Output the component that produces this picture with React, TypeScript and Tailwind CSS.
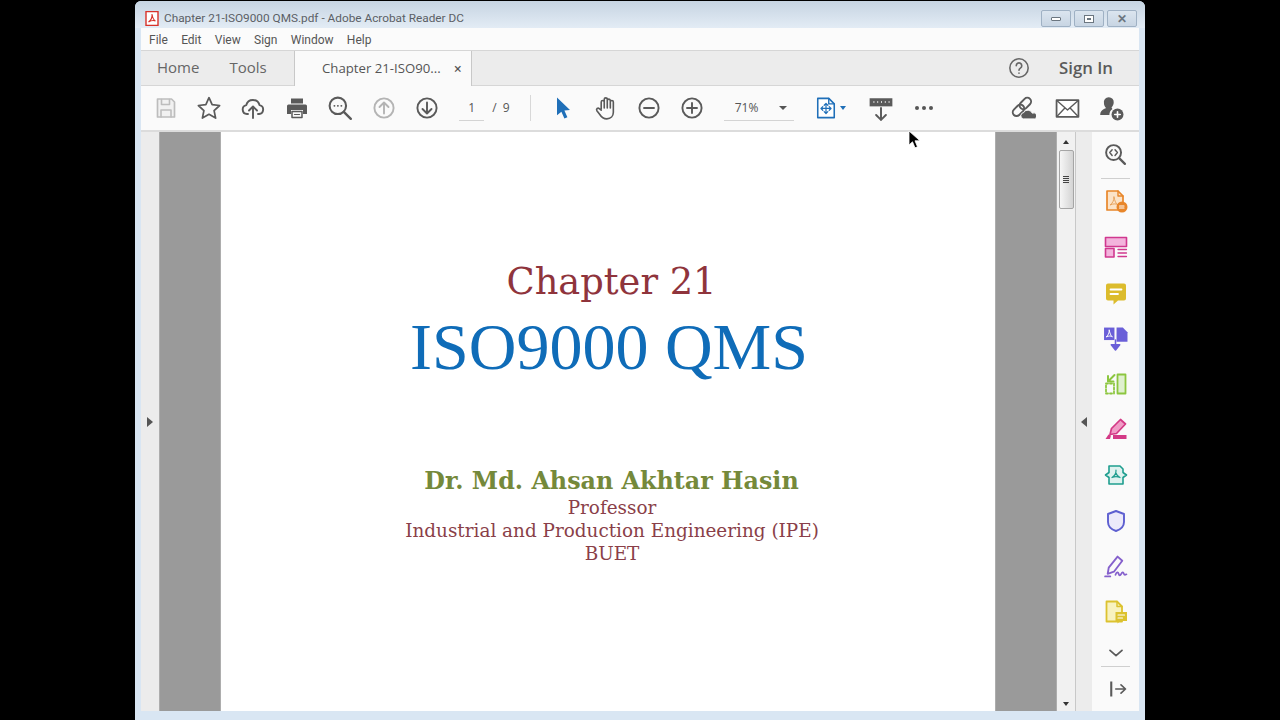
import type { ReactNode } from "react";

const GRAY = "#5a5a5a";

function Svg({ size = 24, children }: { size?: number; children: ReactNode }) {
  return (
    <svg width={size} height={size} viewBox="0 0 24 24" fill="none" strokeLinecap="round" strokeLinejoin="round">
      {children}
    </svg>
  );
}

function Tool({ children, w = "w-[43.6px]" }: { children: ReactNode; w?: string }) {
  return <div className={"flex h-full shrink-0 items-center justify-center " + w}>{children}</div>;
}

function CircleIcon({ color = GRAY, children }: { color?: string; children: ReactNode }) {
  return (
    <Svg>
      <circle cx="12" cy="12" r="9.6" stroke={color} strokeWidth="1.9" />
      <g stroke={color} strokeWidth="1.9">{children}</g>
    </Svg>
  );
}

function TopToolbar() {
  return (
    <div className="flex h-[46px] shrink-0 items-center border-b-2 border-[#dcdcdc] bg-[#fafafa] pl-[3px]">
      <Tool>
        <Svg>
          <path d="M3.5 3h14l3 3v15h-17z" fill="#f1f1f1" stroke="#bdbdbd" strokeWidth="1.7" />
          <path d="M7.5 3.5v5h8v-5M7 21v-7h10v7" stroke="#bdbdbd" strokeWidth="1.6" />
        </Svg>
      </Tool>
      <Tool>
        <Svg size={26}>
          <path d="M12 2.5l2.9 6.4 6.9.8-5.1 4.7 1.4 6.9-6.1-3.5-6.1 3.5 1.4-6.9-5.1-4.7 6.9-.8z" stroke={GRAY} strokeWidth="1.6" />
        </Svg>
      </Tool>
      <Tool>
        <Svg>
          <path d="M7 18H6a4.5 4.5 0 0 1-.7-8.9 6.8 6.8 0 0 1 13.2 0A4.5 4.5 0 0 1 18 18h-1" stroke={GRAY} strokeWidth="1.9" />
          <path d="M12 22v-11M8 14.5l4-4 4 4" stroke={GRAY} strokeWidth="1.9" />
        </Svg>
      </Tool>
      <Tool>
        <Svg>
          <path d="M6 2.5h12v5H6z" fill={GRAY} />
          <path d="M3.5 8.5h17a1.5 1.5 0 0 1 1.5 1.5v8h-4v-4H6v4H2v-8a1.5 1.5 0 0 1 1.5-1.5z" fill={GRAY} />
          <path d="M7 15.5h10v6H7z" stroke={GRAY} strokeWidth="1.5" />
          <path d="M9.5 18.5h5" stroke={GRAY} strokeWidth="1.2" />
        </Svg>
      </Tool>
      <Tool>
        <Svg size={26}>
          <circle cx="10" cy="10" r="7.6" stroke={GRAY} strokeWidth="1.9" />
          <path d="M15.5 15.5l6.5 6.5" stroke={GRAY} strokeWidth="2.2" />
          <path d="M6.8 10h.1M10 10h.1M13.2 10h.1" stroke={GRAY} strokeWidth="1.7" />
        </Svg>
      </Tool>
      <Tool>
        <CircleIcon color="#b4b4b4">
          <path d="M12 17.5v-11M7.5 11l4.5-4.5 4.5 4.5" />
        </CircleIcon>
      </Tool>
      <Tool>
        <CircleIcon>
          <path d="M12 6.5v11M7.5 13l4.5 4.5 4.5-4.5" />
        </CircleIcon>
      </Tool>
      <div className="flex h-full w-[81px] shrink-0 items-center pl-[10px] text-[12px] text-[#555]">
        <span className="w-[25px] border-b border-[#d4d4d4] py-[3px] text-center">1</span>
        <span className="ml-[8px]">/ &nbsp;9</span>
      </div>
      <div className="h-[26px] w-px shrink-0 bg-[#d8d8d8]" />
      <div className="w-[9px] shrink-0" />
      <Tool w="w-[43.4px]">
        <Svg>
          <path d="M7 1.5l13 12.5-5.6.6 3 6.6-3 1.3-3-6.8-4.4 3.6z" fill="#1f6fb8" />
        </Svg>
      </Tool>
      <Tool w="w-[43.4px]">
        <Svg size={26}>
          <path
            transform="translate(1.5 0)"
            d="M7 13V6.5a1.4 1.4 0 0 1 2.8 0V4a1.4 1.4 0 0 1 2.8 0v1.2a1.4 1.4 0 0 1 2.8 0v1.3a1.4 1.4 0 0 1 2.8 0V16c0 3.5-2.5 6-6 6s-5-1.5-6.5-4L3 14.5c-1-1.8 1-3 2.2-2L7 14M9.8 6.5V12M12.6 5v7M15.4 6.5V12"
            stroke={GRAY}
            strokeWidth="1.5"
          />
        </Svg>
      </Tool>
      <Tool w="w-[43.4px]">
        <CircleIcon>
          <path d="M7 12h10" />
        </CircleIcon>
      </Tool>
      <Tool w="w-[43.4px]">
        <CircleIcon>
          <path d="M7 12h10M12 7v10" />
        </CircleIcon>
      </Tool>
      <div className="ml-[10px] flex h-[26px] w-[70px] shrink-0 items-center justify-between border-b border-[#d4d4d4] pl-[11px] pr-[7px] text-[12px] text-[#555]">
        <span>71%</span>
        <span className="h-0 w-0 border-x-[4px] border-t-[4px] border-x-transparent border-t-[#555]" />
      </div>
      <div className="flex w-[57px] shrink-0 items-center pl-[21px]">
        <Svg size={22}>
          <path d="M3 1.5h12l6 6v15H3z" fill="#fff" stroke="#1f6fb8" strokeWidth="1.7" />
          <path d="M15 1.5v6h6" stroke="#1f6fb8" strokeWidth="1.5" />
          <path d="M12 7v11M6.5 12.5h11M10 9l2-2 2 2M10 16l2 2 2-2M8.5 10.5l-2 2 2 2M15.5 10.5l2 2-2 2" stroke="#1f6fb8" strokeWidth="1.3" />
        </Svg>
        <span className="ml-[3px] h-0 w-0 border-x-[3.5px] border-t-[4px] border-x-transparent border-t-[#1f6fb8]" />
      </div>
      <div className="w-[8px] shrink-0" />
      <Tool>
        <Svg size={26}>
          <path d="M1.5 3h21v7.5h-21z" fill={GRAY} />
          <path d="M5 6.5h.9M8.5 6.5h.9M12 6.5h.9M15.5 6.5h.9M19 6.5h.9" stroke="#fff" strokeWidth="1.5" strokeLinecap="butt" />
          <path d="M12 12v11M7.5 18.5l4.500 4.500 4.500-4.500" stroke={GRAY} strokeWidth="1.8" />
        </Svg>
      </Tool>
      <Tool>
        <span className="flex gap-[3px]">
          <span className="size-[4px] rounded-full bg-[#555]" />
          <span className="size-[4px] rounded-full bg-[#555]" />
          <span className="size-[4px] rounded-full bg-[#555]" />
        </span>
      </Tool>
      <div className="ml-auto flex h-full pr-[6px]">
        <Tool w="w-[44px]">
          <Svg size={26}>
            <g transform="rotate(-45 11 11)" stroke={GRAY} strokeWidth="1.8">
              <rect x="0.5" y="7.5" width="12" height="7" rx="3.5" />
              <rect x="9.5" y="7.5" width="12" height="7" rx="3.5" />
            </g>
            <path d="M12 22a3 3 0 0 1 .6-5.8 4.5 4.5 0 0 1 8 .6 2.7 2.7 0 0 1 2.4 5.200z" fill={GRAY} stroke="#fafafa" strokeWidth=".8" />
          </Svg>
        </Tool>
        <Tool w="w-[44px]">
          <Svg size={25}>
            <path d="M1.5 4h21v16h-21z" fill="#fff" stroke={GRAY} strokeWidth="1.7" />
            <path d="M2 4.5l10 9 10-9M2 19.5l7.5-8M22 19.5l-7.5-8" stroke={GRAY} strokeWidth="1.3" />
          </Svg>
        </Tool>
        <Tool w="w-[44px]">
          <Svg size={26}>
            <path d="M10 2a4.5 4.5 0 0 1 4.5 5c0 2-1 3.5-2 4.5l.8 1.500c-1.500 1-2.800 3-2.800 5.500H2c0-3 1.500-4.500 3.500-5.500l2-1c-1-1-2-2.500-2-4.500A4.500 4.500 0 0 1 10 2z" fill={GRAY} />
            <circle cx="18" cy="18" r="5.5" fill={GRAY} />
            <path d="M15.5 18h5M18 15.5v5" stroke="#fff" strokeWidth="1.5" />
          </Svg>
        </Tool>
      </div>
    </div>
  );
}

function PanelIcon({ children }: { children: ReactNode }) {
  return <div className="flex h-[45.6px] shrink-0 items-center justify-center">{children}</div>;
}

function RightPanel() {
  return (
    <div className="flex w-[47px] shrink-0 flex-col bg-[#fafafa]">
      <PanelIcon>
        <Svg size={23}>
          <circle cx="10" cy="10" r="7.8" stroke={GRAY} strokeWidth="2" />
          <path d="M15.8 15.8l6 6" stroke={GRAY} strokeWidth="2.4" />
          <path d="M8.5 7l-2.500 3 2.500 3M11.500 7l2.500 3-2.500 3" stroke={GRAY} strokeWidth="1.5" />
        </Svg>
      </PanelIcon>
      <div className="mx-[9px] h-px shrink-0 bg-[#cfcfcf]" />
      <PanelIcon>
        <Svg>
          <path d="M3 2h11l5 5v14H3z" fill="#fbe3c8" stroke="#e8862a" strokeWidth="1.7" />
          <path d="M14 2v5h5" stroke="#e8862a" strokeWidth="1.4" />
          <path d="M10 8c.5 3-2 7-4 8 3-1.5 7-1.5 8 0-2-1-3.5-4.5-4-8z" stroke="#e8a35c" strokeWidth="1" />
          <circle cx="18" cy="18" r="5.5" fill="#e8862a" />
          <path d="M15.5 17h4.500M20 19h-4.500" stroke="#fff" strokeWidth="1.2" />
        </Svg>
      </PanelIcon>
      <PanelIcon>
        <Svg>
          <path d="M1.5 2.5h21v9h-21z" fill="#f3b3dc" stroke="#d0388f" strokeWidth="1.6" />
          <path d="M1.5 13.5h8.500v8.500H1.500z" fill="#f3b3dc" stroke="#d0388f" strokeWidth="1.6" />
          <path d="M14 14.5h8.500M14 18h8.500M14 21.500h8.500" stroke="#d0388f" strokeWidth="1.3" />
        </Svg>
      </PanelIcon>
      <PanelIcon>
        <Svg>
          <path d="M4 2.5h16a2 2 0 0 1 2 2v13a2 2 0 0 1-2 2h-6l-4.500 4v-4H4a2 2 0 0 1-2-2v-13a2 2 0 0 1 2-2z" fill="#dcbc2d" />
          <path d="M6.5 8.5h11M6.500 13h7.500" stroke="#fff" strokeWidth="1.8" />
        </Svg>
      </PanelIcon>
      <PanelIcon>
        <Svg size={25}>
          <path d="M1 1.5h10v12H1z" fill="#6a5fd8" />
          <path d="M13 1.5h6l4.500 4.500v9H13z" fill="#6a5fd8" />
          <path d="M6 4c.4 2.5-1.500 5.500-3 6.500 2.500-1.200 5-1.200 6 0-1.500-1-2.600-4-3-6.500z" stroke="#fff" strokeWidth=".9" />
          <path d="M12 13.5v6M8 18h8l-4 5z" fill="#6a5fd8" stroke="#6a5fd8" strokeWidth="1.5" />
        </Svg>
      </PanelIcon>
      <PanelIcon>
        <Svg>
          <path d="M13.5 2.5h8v19h-8z" fill="#dff0cf" stroke="#8cc63f" strokeWidth="1.8" />
          <path d="M2 11.5h8v10H2z" stroke="#8cc63f" strokeWidth="1.8" strokeDasharray="2 2" />
          <path d="M10.5 3l-6 6M4 4v5.500h5.500" stroke="#8cc63f" strokeWidth="2" />
        </Svg>
      </PanelIcon>
      <PanelIcon>
        <Svg>
          <path d="M16.5 2.5l5 4.500-9 9.500-6.500 1 1.500-6z" fill="#f09cc6" stroke="#d33a86" strokeWidth="1.7" />
          <path d="M1.5 22l3-4.500 2.500 1-1 3.500zM9 18h13.500v4H9z" fill="#d33a86" />
        </Svg>
      </PanelIcon>
      <PanelIcon>
        <Svg>
          <path d="M5 3h11l3 3v3.500l3.500 2.500-3.500 2.500V21H5v-6.500L1.500 12 5 9.500z" fill="#dff2ef" stroke="#1f9e8f" strokeWidth="1.6" />
          <path d="M12 7c.2 3-1.500 6-4 7.500M12 10c.5 2 2 3.500 4 4.500M8 14.500c2.500-1 5.500-1 8 0" stroke="#1f9e8f" strokeWidth="1.2" />
        </Svg>
      </PanelIcon>
      <PanelIcon>
        <Svg>
          <path d="M12 2l8 3v8c0 4.500-3.500 7.500-8 9-4.500-1.500-8-4.500-8-9V5z" fill="#eceafa" stroke="#5d5fd0" strokeWidth="1.9" />
        </Svg>
      </PanelIcon>
      <PanelIcon>
        <Svg size={25}>
          <path d="M14 2.5l4.500 4-8 10.500-6 2 1-6z" stroke="#8560cc" strokeWidth="1.8" />
          <path d="M2 21.5h5M12 20c1-3 2.500-3 3-1s1.500 2 2.500 0 2-1.500 2.500 0 1.500 1 2.500.5" stroke="#8560cc" strokeWidth="1.7" />
        </Svg>
      </PanelIcon>
      <PanelIcon>
        <Svg>
          <path d="M2.5 1.5h10.500l5 5v15H2.500z" fill="#f8f2bf" stroke="#dcc22f" strokeWidth="1.8" />
          <path d="M13 1.5v5h5" stroke="#dcc22f" strokeWidth="1.5" />
          <path d="M11.5 12h11.500v9h-7l-2.500 2.500V21h-2z" fill="#dcc22f" />
          <path d="M14 15h6.500M14 18h4.500" stroke="#fff" strokeWidth="1.2" />
        </Svg>
      </PanelIcon>
      <div className="flex h-[31px] shrink-0 items-center justify-center pt-[6px]">
        <Svg size={16}>
          <path d="M3 8l9 8 9-8" stroke={GRAY} strokeWidth="2.6" />
        </Svg>
      </div>
      <div className="mx-[9px] h-px shrink-0 bg-[#cfcfcf]" />
      <div className="flex h-[45px] shrink-0 items-center justify-center pl-[4px]">
        <Svg size={18}>
          <path d="M3 2v20" stroke={GRAY} strokeWidth="2.8" strokeLinecap="butt" />
          <path d="M9 12h13M16 6.5l6 5.500-6 5.500" stroke={GRAY} strokeWidth="2.2" />
        </Svg>
      </div>
    </div>
  );
}

function PdfPage() {
  return (
    <div className="flex w-[774px] shrink-0 flex-col items-center overflow-hidden bg-white font-['Liberation_Serif',serif]">
      <div className="ml-[7px] mt-[125px] font-['DejaVu_Serif',serif] text-[36.8px] leading-[50px] text-[#8f343c]">Chapter 21</div>
      <div className="ml-[2px] text-[66px] leading-[80px] text-[#0f6cb8]">ISO9000 QMS</div>
      <div className="ml-[7px] mt-[78px] font-['DejaVu_Serif',serif] text-[23.8px] font-bold leading-[32px] text-[#75893a]">Dr. Md. Ahsan Akhtar Hasin</div>
      <div className="ml-[8px] flex flex-col items-center font-['DejaVu_Serif',serif] text-[18.4px] leading-[23px] text-[#8a3f49]">
        <span className="leading-[22px]">Professor</span>
        <span>Industrial and Production Engineering (IPE)</span>
        <span>BUET</span>
      </div>
    </div>
  );
}

function Scrollbar() {
  return (
    <div className="flex w-[18px] shrink-0 flex-col items-center bg-[#f1f1f1]">
      <span className="mt-[8px] h-0 w-0 border-x-[3.5px] border-b-[4px] border-x-transparent border-b-[#333]" />
      <div className="mt-[6px] flex h-[59px] w-[15px] flex-col items-center justify-center gap-px rounded-[2px] border border-[#a5a5a5] bg-gradient-to-r from-[#f6f6f6] to-[#d4d4d4]">
        <span className="h-px w-[6px] bg-[#444]" />
        <span className="h-px w-[6px] bg-[#444]" />
        <span className="h-px w-[6px] bg-[#444]" />
        <span className="h-px w-[6px] bg-[#444]" />
      </div>
      <span className="mb-[5px] mt-auto h-0 w-0 border-x-[3.5px] border-t-[4px] border-x-transparent border-t-[#333]" />
    </div>
  );
}

function WindowButton({ children }: { children: ReactNode }) {
  return (
    <div className="flex h-[17px] w-[30px] items-center justify-center rounded-[2px] border border-[#9fb1c4] bg-gradient-to-b from-[#dbe5ef] to-[#c8d5e3]">
      {children}
    </div>
  );
}

export default function App() {
  return (
    <div className="relative flex h-[720px] w-[1280px] items-end justify-center overflow-hidden bg-black font-['Open_Sans',sans-serif]">
      <div className="flex h-[719px] w-[1010px] flex-col rounded-t-[6px] bg-[#d9e6f3] px-[6px] pb-[9px]">
        <div className="-mx-[6px] flex h-[27px] shrink-0 items-center rounded-t-[6px] bg-gradient-to-b from-[#c6d4e2] to-[#e3ecf5] pl-[10px] pr-[8px] pt-[8px] font-['Roboto',sans-serif]">
          <svg width="14" height="15" viewBox="0 0 14 15">
            <path d="M1 .5h12v14H1z" fill="#fff" stroke="#d8322a" strokeWidth="1.4" />
            <path d="M7 3c.4 3-1.5 6.5-3.5 8 2.500-1.500 5-2 7-1-2-.8-3-4-3.500-7z" fill="none" stroke="#d8322a" strokeWidth="1.1" />
          </svg>
          <span className="ml-[5px] text-[11.8px] text-[#5b5f66]">Chapter 21-ISO9000 QMS.pdf - Adobe Acrobat Reader DC</span>
          <div className="ml-auto flex gap-[3px]">
            <WindowButton><span className="h-[4px] w-[10px] rounded-[1px] border border-[#6b7680] bg-white" /></WindowButton>
            <WindowButton><span className="flex h-[8px] w-[10px] items-center justify-center border border-[#6b7680] bg-white"><span className="h-[2px] w-[4px] border border-[#6b7680]" /></span></WindowButton>
            <WindowButton><span className="text-[12px] font-bold leading-none text-[#6b7680]">✕</span></WindowButton>
          </div>
        </div>
        <div className="flex h-[22px] shrink-0 items-center gap-[13.3px] bg-[#fbfbfb] pl-[8px] pt-[2px] font-['Roboto',sans-serif] text-[12px] text-[#555]">
          <span>File</span>
          <span>Edit</span>
          <span>View</span>
          <span>Sign</span>
          <span>Window</span>
          <span>Help</span>
        </div>
        <div className="flex h-[36px] shrink-0 items-stretch border-y border-[#d6d6d6] bg-[#ececec] text-[#666]">
          <div className="flex w-[153px] items-center gap-[30px] pb-[2px] pl-[16px] text-[15px]">
            <span>Home</span>
            <span>Tools</span>
          </div>
          <div className="-mb-px flex w-[178px] items-center border-x border-[#c8c8c8] bg-[#fafafa] pl-[27px] text-[13.2px] text-[#555]">
            <span>Chapter 21-ISO90...</span>
            <span className="ml-[13px] text-[14px] font-semibold leading-none text-[#555]">×</span>
          </div>
          <div className="ml-auto flex items-center pb-px pr-[26px]">
            <Svg size={22}>
              <circle cx="12" cy="12" r="10" stroke="#666" strokeWidth="1.7" />
              <path d="M9 9.5a3 3 0 1 1 4.500 2.600c-1 .6-1.500 1-1.500 2.400M12 17.600v.1" stroke="#666" strokeWidth="1.8" />
            </Svg>
            <span className="ml-[29px] text-[16.8px] font-semibold text-[#5a5a5a]">Sign In</span>
          </div>
        </div>
        <TopToolbar />
        <div className="flex min-h-0 flex-1">
          <div className="flex w-[18px] shrink-0 items-center justify-center bg-[#ececec]">
            <span className="h-0 w-0 border-y-[5px] border-l-[6px] border-y-transparent border-l-[#555]" />
          </div>
          <div className="w-[62px] shrink-0 border-x border-[#adadad] bg-[#9a9a9a]" />
          <PdfPage />
          <div className="w-[62px] shrink-0 border-x border-[#adadad] bg-[#9a9a9a]" />
          <Scrollbar />
          <div className="flex w-[17px] shrink-0 items-center justify-center border-l border-[#c8c8c8] bg-[#ececec]">
            <span className="h-0 w-0 border-y-[5px] border-r-[6px] border-y-transparent border-r-[#555]" />
          </div>
          <RightPanel />
        </div>
      </div>
      <svg className="absolute left-[908px] top-[130px]" width="13" height="20" viewBox="0 0 13 20">
        <path d="M1 1v14l3.500-3.200 2.500 6 2.500-1-2.500-6H12z" fill="#000" stroke="#fff" strokeWidth=".8" />
      </svg>
    </div>
  );
}
